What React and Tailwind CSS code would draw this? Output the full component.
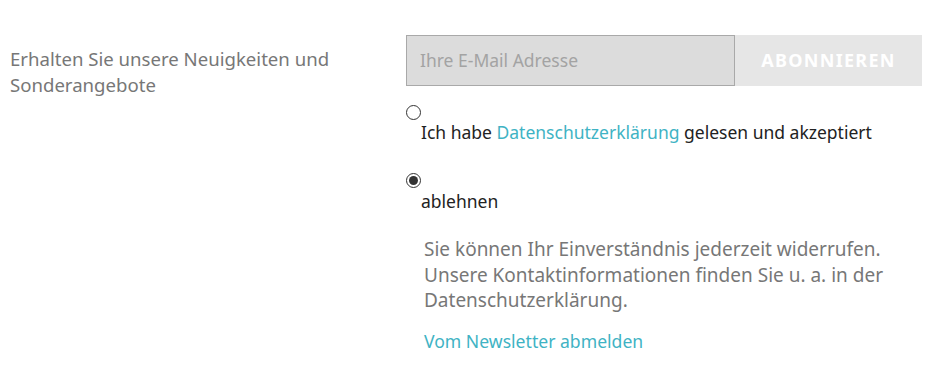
export default function App() {
  return (
    <div className="w-[949px] h-[383px] bg-white flex pt-[35px] pl-[10px]" style={{ fontFamily: '"Noto Sans", "Open Sans", sans-serif' }}>
      <div className="w-[396px] pt-[11px] text-[18.6px] leading-[26px] text-[#777777]">
        Erhalten Sie unsere Neuigkeiten und<br />Sonderangebote
      </div>
      <div className="w-[516px] flex flex-col">
        <div className="flex h-[51px]">
          <div className="w-[329px] h-full bg-[#dcdcdc] border border-[#a9a9a9] flex items-center pl-[13px] text-[17.5px] text-[#a3a3a3]">
            Ihre E-Mail Adresse
          </div>
          <div className="flex-1 h-full bg-[#e6e6e6] flex items-center justify-center text-[18px] font-bold text-white tracking-[1.3px]">
            ABONNIEREN
          </div>
        </div>
        <div className="mt-[19px] flex flex-col">
          <div className="w-[15px] h-[15px] rounded-full border border-[#333] bg-white" />
          <div className="pl-[15px] text-[17.5px] leading-[24px] text-[#222]">
            Ich habe <span className="text-[#3fb3c4]">Datenschutzerklärung</span> gelesen und akzeptiert
          </div>
        </div>
        <div className="mt-[29px] flex flex-col">
          <div className="w-[15px] h-[15px] rounded-full border border-[#333] bg-white flex items-center justify-center">
            <div className="w-[9px] h-[9px] rounded-full bg-[#333]" />
          </div>
          <div className="mt-[1px] pl-[15px] text-[17.5px] leading-[24px] text-[#222]">ablehnen</div>
        </div>
        <div className="pl-[18px] mt-[24px] text-[19px] leading-[25.5px] text-[#777777]">
          <p>Sie können Ihr Einverständnis jederzeit widerrufen.<br />Unsere Kontaktinformationen finden Sie u. a. in der<br />Datenschutzerklärung.</p>
          <p className="mt-[15px] text-[17.6px] text-[#3fb3c4]">Vom Newsletter abmelden</p>
        </div>
      </div>
    </div>
  );
}
